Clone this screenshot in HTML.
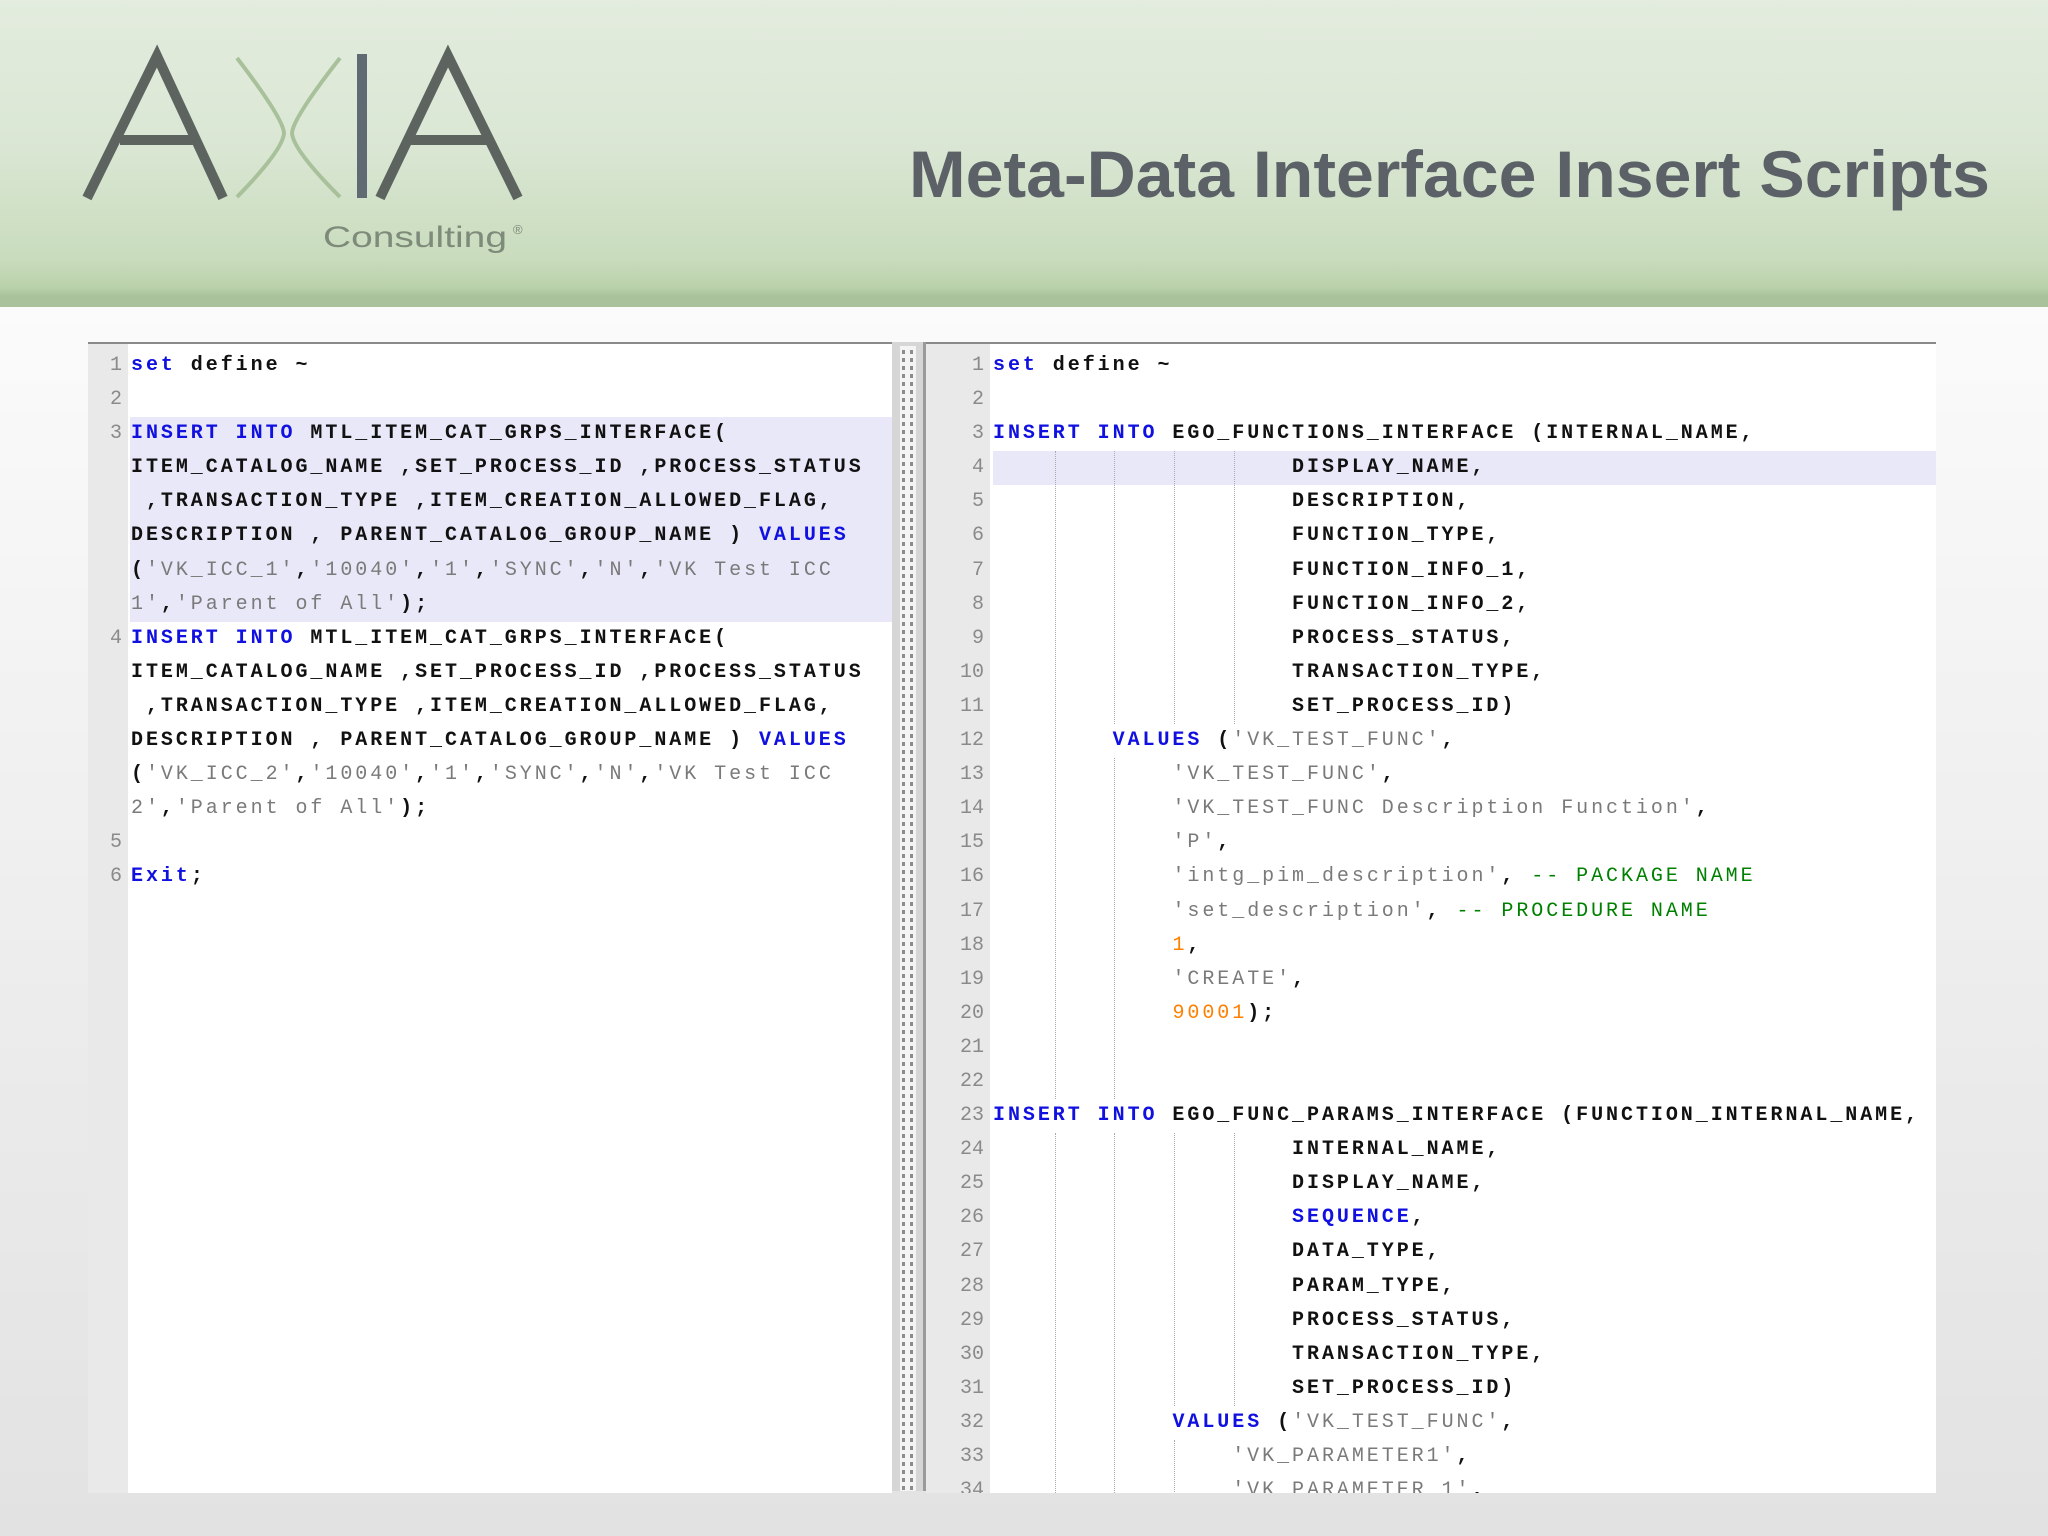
<!DOCTYPE html>
<html><head><meta charset="utf-8"><style>
body{margin:0;width:2048px;height:1536px;overflow:hidden;position:relative;background:linear-gradient(#fbfbfb 310px,#f2f2f2 700px,#e2e2e2 1536px);font-family:"Liberation Sans",sans-serif}
#hdr{position:absolute;left:0;top:0;width:2048px;height:307px;background:linear-gradient(#e3ecde 0,#dbe7d5 140px,#c9dcbd 260px,#b9d1aa 288px,#a9c29b 296px,#a9c29b 307px)}
.panel{position:absolute;top:342px;height:1149px;background:#fff;border-top:2px solid #8a8a8a;overflow:hidden}
.gut{position:absolute;top:0;bottom:0;background:#e9e9e9}
.code{position:absolute;left:0;top:5px;font-family:"Liberation Mono",monospace;font-size:20px;letter-spacing:2.95px;line-height:34.1px;white-space:pre;color:#111;font-weight:bold}
.n{position:absolute;font-family:"Liberation Mono",monospace;font-size:20px;line-height:34.1px;color:#8a8a8a;text-align:right;white-space:pre}
.k{color:#1010e0}.s{color:#7a7a7a;font-weight:normal}.o{color:#ff8000;font-weight:normal}.c{color:#008000;font-weight:normal}
.hl{position:absolute;background:#e8e8f8}
.g{position:absolute;width:0;border-left:1px dotted #aaa}
</style></head><body>
<div id="hdr"></div>
<svg style="position:absolute;left:0;top:0" width="700" height="300">
<g stroke="#5d6460" stroke-width="10" fill="none">
<path d="M87 198 L157 56 L223 198"/><path d="M120 140 H194"/>
<path d="M380 198 L448 56 L518 198"/><path d="M406 140 H491"/>
</g>
<path d="M362 54 V198" stroke="#5f6a72" stroke-width="10"/>
<g stroke="#a9c19b" stroke-width="4" fill="none">
<path d="M237 58 Q283 118 284 133 Q283 150 237 197"/>
<path d="M340 58 Q293 118 292 133 Q293 150 340 197"/>
</g>
<text x="323" y="247" font-family="Liberation Sans, sans-serif" font-size="30" fill="#7e8b7a" textLength="184" lengthAdjust="spacingAndGlyphs">Consulting</text>
<text x="513" y="234" font-family="Liberation Sans, sans-serif" font-size="13" fill="#7e8b7a">®</text>
</svg>
<svg style="position:absolute;left:0;top:0" width="2048" height="300">
<text x="909" y="197" font-family="Liberation Sans, sans-serif" font-weight="bold" font-size="66" fill="#5b6166" textLength="1081" lengthAdjust="spacingAndGlyphs">Meta-Data Interface Insert Scripts</text>
</svg>

<div class="panel" style="left:88px;width:804px">
<div class="gut" style="left:0;width:40px"></div>
<div class="hl" style="left:42px;width:762px;top:73px;height:205px"></div>
<div class="n" style="left:0;width:34px;top:5px">1
2
3





4





5
6</div>
<div class="code" style="left:43px"><span class="k">set</span> define ~

<span class="k">INSERT INTO</span> MTL_ITEM_CAT_GRPS_INTERFACE(
ITEM_CATALOG_NAME ,SET_PROCESS_ID ,PROCESS_STATUS
 ,TRANSACTION_TYPE ,ITEM_CREATION_ALLOWED_FLAG,
DESCRIPTION , PARENT_CATALOG_GROUP_NAME ) <span class="k">VALUES</span>
(<span class="s">'VK_ICC_1'</span>,<span class="s">'10040'</span>,<span class="s">'1'</span>,<span class="s">'SYNC'</span>,<span class="s">'N'</span>,<span class="s">'VK Test ICC
1'</span>,<span class="s">'Parent of All'</span>);
<span class="k">INSERT INTO</span> MTL_ITEM_CAT_GRPS_INTERFACE(
ITEM_CATALOG_NAME ,SET_PROCESS_ID ,PROCESS_STATUS
 ,TRANSACTION_TYPE ,ITEM_CREATION_ALLOWED_FLAG,
DESCRIPTION , PARENT_CATALOG_GROUP_NAME ) <span class="k">VALUES</span>
(<span class="s">'VK_ICC_2'</span>,<span class="s">'10040'</span>,<span class="s">'1'</span>,<span class="s">'SYNC'</span>,<span class="s">'N'</span>,<span class="s">'VK Test ICC
2'</span>,<span class="s">'Parent of All'</span>);

<span class="k">Exit</span>;</div>
</div>

<div style="position:absolute;left:892px;top:342px;width:34px;height:1149px;background:#d6d6d6"></div>
<div style="position:absolute;left:900px;top:346px;width:16px;height:1145px;background-color:#f4f4f4;background-image:linear-gradient(#f4f4f4 0,#f4f4f4 4px,transparent 4px),linear-gradient(90deg,transparent 2px,#8c8c8c 2px,#8c8c8c 5px,transparent 5px,transparent 10px,#8c8c8c 10px,#8c8c8c 13px,transparent 13px);background-size:16px 8px,16px 8px"></div>
<div style="position:absolute;left:923px;top:342px;width:3px;height:1149px;background:#9a9a9a"></div>

<div class="panel" style="left:926px;width:1010px">
<div class="gut" style="left:0;width:64px"></div>
<div class="hl" style="left:67px;width:943px;top:107px;height:34px"></div>
<div class="n" style="left:0;width:58px;top:5px">1
2
3
4
5
6
7
8
9
10
11
12
13
14
15
16
17
18
19
20
21
22
23
24
25
26
27
28
29
30
31
32
33
34</div>
<div class="g" style="left:129px;top:107px;height:648px"></div>
<div class="g" style="left:129px;top:789px;height:380px"></div>
<div class="g" style="left:188px;top:107px;height:273px"></div>
<div class="g" style="left:188px;top:414px;height:341px"></div>
<div class="g" style="left:188px;top:789px;height:380px"></div>
<div class="g" style="left:248px;top:107px;height:273px"></div>
<div class="g" style="left:248px;top:789px;height:273px"></div>
<div class="g" style="left:248px;top:1096px;height:74px"></div>
<div class="g" style="left:308px;top:107px;height:273px"></div>
<div class="g" style="left:308px;top:789px;height:273px"></div>
<div class="code" style="left:67px"><span class="k">set</span> define ~

<span class="k">INSERT INTO</span> EGO_FUNCTIONS_INTERFACE (INTERNAL_NAME,
                    DISPLAY_NAME,
                    DESCRIPTION,
                    FUNCTION_TYPE,
                    FUNCTION_INFO_1,
                    FUNCTION_INFO_2,
                    PROCESS_STATUS,
                    TRANSACTION_TYPE,
                    SET_PROCESS_ID)
        <span class="k">VALUES</span> (<span class="s">'VK_TEST_FUNC'</span>,
            <span class="s">'VK_TEST_FUNC'</span>,
            <span class="s">'VK_TEST_FUNC Description Function'</span>,
            <span class="s">'P'</span>,
            <span class="s">'intg_pim_description'</span>, <span class="c">-- PACKAGE NAME</span>
            <span class="s">'set_description'</span>, <span class="c">-- PROCEDURE NAME</span>
            <span class="o">1</span>,
            <span class="s">'CREATE'</span>,
            <span class="o">90001</span>);


<span class="k">INSERT INTO</span> EGO_FUNC_PARAMS_INTERFACE (FUNCTION_INTERNAL_NAME,
                    INTERNAL_NAME,
                    DISPLAY_NAME,
                    <span class="k">SEQUENCE</span>,
                    DATA_TYPE,
                    PARAM_TYPE,
                    PROCESS_STATUS,
                    TRANSACTION_TYPE,
                    SET_PROCESS_ID)
            <span class="k">VALUES</span> (<span class="s">'VK_TEST_FUNC'</span>,
                <span class="s">'VK_PARAMETER1'</span>,
                <span class="s">'VK_PARAMETER_1'</span>,</div>
</div>
</body></html>
